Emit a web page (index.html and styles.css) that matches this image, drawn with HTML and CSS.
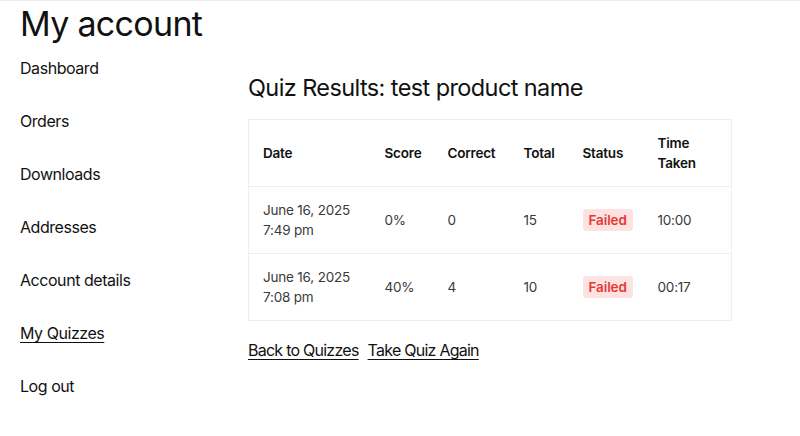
FILE: index.html
```html
<!DOCTYPE html>
<html lang="en">
<head>
<meta charset="utf-8">
<title>My account</title>
<link rel="stylesheet" href="styles.css">
</head>
<body>
<div class="page">
  <h1 class="title">My account</h1>
  <div class="layout">
    <nav class="nav">
      <a href="#">Dashboard</a>
      <a href="#">Orders</a>
      <a href="#">Downloads</a>
      <a href="#">Addresses</a>
      <a href="#">Account details</a>
      <a href="#" class="active">My Quizzes</a>
      <a href="#">Log out</a>
    </nav>
    <main class="content">
      <h2 class="subtitle">Quiz Results: test product name</h2>
      <table class="results">
        <colgroup>
          <col class="c-date"><col class="c-score"><col class="c-correct"><col class="c-total"><col class="c-status"><col class="c-time">
        </colgroup>
        <thead>
          <tr><th>Date</th><th>Score</th><th>Correct</th><th>Total</th><th>Status</th><th>Time<br>Taken</th></tr>
        </thead>
        <tbody>
          <tr><td>June 16, 2025<br>7:49 pm</td><td>0%</td><td>0</td><td>15</td><td><span class="badge">Failed</span></td><td>10:00</td></tr>
          <tr><td>June 16, 2025<br>7:08 pm</td><td>40%</td><td>4</td><td>10</td><td><span class="badge">Failed</span></td><td>00:17</td></tr>
        </tbody>
      </table>
      <div class="actions">
        <a href="#">Back to Quizzes</a>
        <a href="#">Take Quiz Again</a>
      </div>
    </main>
  </div>
</div>
</body>
</html>
```

FILE: styles.css
```css
html, body {
  margin: 0;
  padding: 0;
  background: #fff;
}
body {
  font-family: Inter, "Noto Sans", sans-serif;
  color: #111;
  border-top: 1px solid #eeeeee;
}
.page {
  padding: 0 20px;
}
.title {
  margin: 0;
  padding-top: 1px;
  font-size: 34px;
  font-weight: 400;
  letter-spacing: -0.7px;
  line-height: 44px;
}
.layout {
  display: flex;
}
.nav {
  width: 228px;
  display: flex;
  flex-direction: column;
  gap: 31px;
  padding-top: 11px;
}
.nav a {
  color: #111;
  text-decoration: none;
  font-size: 16px;
  letter-spacing: -0.45px;
  line-height: 22px;
}
.nav a.active {
  text-decoration: underline;
  text-underline-offset: 3px;
  text-decoration-thickness: 1px;
}
.content {
  padding-top: 27px;
}
.subtitle {
  margin: 0 0 16px;
  font-size: 23.5px;
  font-weight: 400;
  letter-spacing: -0.6px;
  line-height: 30px;
}
.results {
  border-collapse: collapse;
  border: 1px solid #eeeeee;
  table-layout: fixed;
  width: 483px;
}
.c-date { width: 122px; }
.c-score { width: 63px; }
.c-correct { width: 76px; }
.c-total { width: 59px; }
.c-status { width: 75px; }
.c-time { width: 88px; }
.results th, .results td {
  text-align: left;
  padding: 13px 14px;
  font-size: 13.5px;
  line-height: 20px;
  height: 40px;
  border-bottom: 1px solid #eeeeee;
  letter-spacing: -0.2px;
}
.results th {
  font-weight: 600;
  color: #111;
}
.results td {
  color: #3a3a3a;
}
.badge {
  display: inline-block;
  background: #fde2e2;
  color: #e53935;
  font-weight: 600;
  padding: 1px 6px;
  border-radius: 3px;
  line-height: 20px;
  letter-spacing: -0.1px;
}
.actions {
  margin-top: 19px;
  display: flex;
  gap: 9px;
}
.actions a {
  color: #111;
  font-size: 16px;
  letter-spacing: -0.75px;
  text-decoration: underline;
  text-underline-offset: 3px;
  text-decoration-thickness: 1px;
}
```
